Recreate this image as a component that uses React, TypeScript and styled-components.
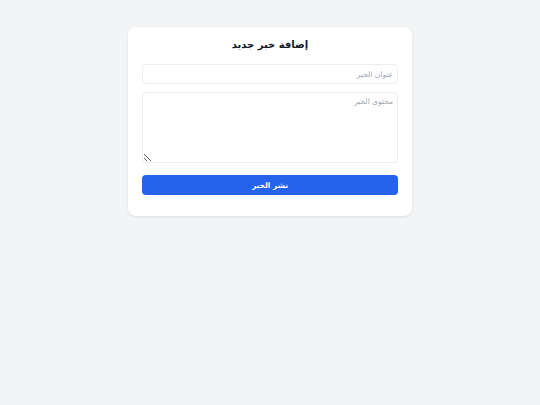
import styled, { createGlobalStyle } from "styled-components";

const GlobalStyle = createGlobalStyle`
  html, body {
    margin: 0;
    padding: 0;
    background: #f3f4f6;
    font-family: "DejaVu Sans", "Noto Sans", sans-serif;
  }
`;

const Page = styled.div`
  min-height: 405px;
  display: flex;
  justify-content: center;
  align-items: flex-start;
  padding-top: 27px;
  box-sizing: border-box;
`;

const Card = styled.form`
  width: 284px;
  box-sizing: border-box;
  background: #ffffff;
  border-radius: 8px;
  box-shadow: 0 1px 3px rgba(0, 0, 0, 0.07), 0 1px 2px rgba(0, 0, 0, 0.03);
  padding: 9px 14px 21px;
  direction: rtl;
  display: flex;
  flex-direction: column;
`;

const Title = styled.h2`
  margin: 0 0 10px;
  text-align: center;
  font-size: 10px;
  line-height: 18px;
  font-weight: 700;
  color: #111827;
`;

const fieldBase = `
  box-sizing: border-box;
  width: 100%;
  border: 1px solid #eceef1;
  border-radius: 4px;
  background: #fff;
  font-family: "DejaVu Sans", "Noto Sans", sans-serif;
  font-size: 7.5px;
  color: #111827;
  outline: none;
  direction: rtl;
  &::placeholder {
    color: #a0a6b0;
  }
`;

const Input = styled.input`
  ${fieldBase}
  height: 20px;
  padding: 0 4px;
  margin: 0 0 8px;
`;

const TextArea = styled.textarea`
  ${fieldBase}
  height: 71px;
  padding: 4px 4px;
  margin: 0 0 12px;
  display: block;
`;

const Button = styled.button`
  height: 20px;
  border: none;
  border-radius: 4px;
  background: #2563eb;
  color: #ffffff;
  font-family: "DejaVu Sans", "Noto Sans", sans-serif;
  font-size: 7.5px;
  font-weight: 700;
  cursor: pointer;
`;

export default function App() {
  return (
    <>
      <GlobalStyle />
      <Page>
        <Card onSubmit={(e) => e.preventDefault()}>
          <Title>إضافة خبر جديد</Title>
          <Input placeholder="عنوان الخبر" />
          <TextArea placeholder="محتوى الخبر" />
          <Button type="submit">نشر الخبر</Button>
        </Card>
      </Page>
    </>
  );
}
